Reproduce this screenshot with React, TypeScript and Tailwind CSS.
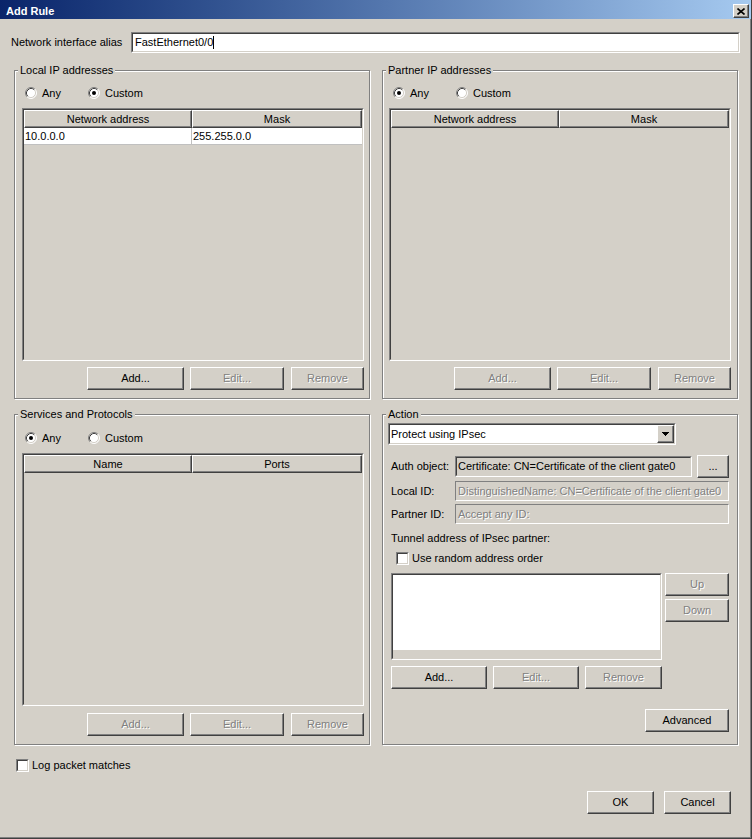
import React from 'react';

/* ===== classic 3D helpers ===== */
const DIS = 'text-[#808080] [text-shadow:1px_1px_0_#fff]';

type BtnProps = { label: string; disabled?: boolean; className?: string };

const Button = ({ label, disabled, className = '' }: BtnProps) => (
  <div
    className={`h-[23px] shrink-0 flex items-center justify-center bg-[#d4d0c8] border border-t-white border-l-white border-r-[#404040] border-b-[#404040] shadow-[inset_-1px_-1px_0_#808080] ${className}`}
  >
    <span className={disabled ? DIS : 'text-black'}>{label}</span>
  </div>
);

type SunkenProps = { className?: string; inner?: string; children?: React.ReactNode };

const Sunken = ({ className = '', inner = '', children }: SunkenProps) => (
  <div className={`shrink-0 border border-t-[#808080] border-l-[#808080] border-b-white border-r-white ${className}`}>
    <div className={`h-full border border-t-[#404040] border-l-[#404040] border-b-[#d4d0c8] border-r-[#d4d0c8] ${inner}`}>
      {children}
    </div>
  </div>
);

const Radio = ({ checked }: { checked?: boolean }) => (
  <svg width="12" height="12" viewBox="0 0 12 12" className="shrink-0">
    <circle cx="6" cy="6" r="5" fill="#fff" />
    <path d="M2.11 9.89A5.5 5.5 0 0 1 9.89 2.11" fill="none" stroke="#808080" />
    <path d="M2.82 9.18A4.5 4.5 0 0 1 9.18 2.82" fill="none" stroke="#404040" />
    <path d="M9.89 2.11A5.5 5.5 0 0 1 2.11 9.89" fill="none" stroke="#fff" />
    <path d="M9.18 2.82A4.5 4.5 0 0 1 2.82 9.18" fill="none" stroke="#d4d0c8" />
    {checked && <circle cx="6" cy="6" r="2" fill="#000" />}
  </svg>
);

const Checkbox = () => <Sunken className="w-[13px] h-[13px]" inner="bg-white" />;

const RadioRow = ({ any }: { any: boolean }) => (
  <div className="flex items-center h-[16px]">
    <div className="w-[63px] flex items-center gap-[5px]">
      <Radio checked={any} />
      <span>Any</span>
    </div>
    <div className="flex items-center gap-[5px]">
      <Radio checked={!any} />
      <span>Custom</span>
    </div>
  </div>
);

type GroupProps = { title: string; className?: string; children?: React.ReactNode };

const GroupBox = ({ title, className = '', children }: GroupProps) => (
  <div className={`relative w-[356px] border border-[#808080] shadow-[inset_1px_1px_0_#fff,1px_1px_0_#fff] ${className}`}>
    <span className="absolute -top-[7px] left-[3px] px-[2px] bg-[#d4d0c8] leading-[13px]">{title}</span>
    {children}
  </div>
);

type TableProps = { cols: [string, string]; rows: [string, string][] };

const ListTable = ({ cols, rows }: TableProps) => (
  <Sunken className="w-[342px] h-[253px]" inner="flex flex-col bg-[#d4d0c8]">
    <div className="flex h-[18px] shrink-0">
      {cols.map((c, i) => (
        <div
          key={c}
          className={`${i === 0 ? 'w-[168px]' : 'flex-1'} flex items-center justify-center bg-[#d4d0c8] border border-t-white border-l-white border-r-[#404040] border-b-[#404040] shadow-[inset_-1px_-1px_0_#808080]`}
        >
          {c}
        </div>
      ))}
    </div>
    {rows.map(r => (
      <div key={r[0]} className="flex h-[17px] shrink-0 bg-white border-b border-b-[#c0c0c0]">
        <div className="w-[168px] pl-[1px] flex items-center border-r border-r-[#c0c0c0]">{r[0]}</div>
        <div className="flex-1 pl-[1px] flex items-center">{r[1]}</div>
      </div>
    ))}
  </Sunken>
);

type ListGroupProps = {
  title: string;
  any: boolean;
  cols: [string, string];
  rows: [string, string][];
  addEnabled: boolean;
  top: string;
  btnTop: string;
  left?: string;
};

const ListGroup = ({ title, any, cols, rows, addEnabled, top, btnTop, left = 'ml-[7px]' }: ListGroupProps) => (
  <GroupBox title={title} className="flex flex-col pb-[8px]">
    <div className={`${top} pl-[10px]`}>
      <RadioRow any={any} />
    </div>
    <div className={`${left} mt-[7px]`}>
      <ListTable cols={cols} rows={rows} />
    </div>
    <div className={`${left} w-[342px] flex justify-end ${btnTop}`}>
      <Button label="Add..." disabled={!addEnabled} className="w-[97px]" />
      <Button label="Edit..." disabled className="ml-[6px] w-[94px]" />
      <Button label="Remove" disabled className="ml-[7px] w-[73px]" />
    </div>
  </GroupBox>
);

/* ===== Action ===== */
const ActionGroup = () => (
  <GroupBox title="Action" className="flex flex-col pl-[5px]">
    <Sunken className="mt-[8px] w-[288px] h-[22px]" inner="bg-white flex items-stretch">
      <div className="flex-1 pl-[1px] flex items-center">Protect using IPsec</div>
      <div className="w-[17px] flex items-center justify-center bg-[#d4d0c8] border border-t-white border-l-white border-r-[#404040] border-b-[#404040] shadow-[inset_-1px_-1px_0_#808080]">
        <svg width="7" height="4" viewBox="0 0 7 4">
          <path d="M0 0h7v1H0zM1 1h5v1H1zM2 2h3v1H2zM3 3h1v1H3z" fill="#000" />
        </svg>
      </div>
    </Sunken>

    <div className="mt-[10px] h-[23px] flex items-center">
      <div className="w-[67px] pl-[3px]">Auth object:</div>
      <Sunken className="w-[237px] h-[21px]" inner="bg-[#d4d0c8] pl-[1px] flex items-center whitespace-nowrap overflow-hidden">
        Certificate: CN=Certificate of the client gate0
      </Sunken>
      <Button label="..." className="ml-[5px] w-[32px]" />
    </div>

    <div className="mt-[3px] h-[20px] flex items-center">
      <div className="w-[67px] pl-[3px]">Local ID:</div>
      <div className="w-[274px] h-[20px] pl-[2px] flex items-center border border-t-[#808080] border-l-[#808080] border-b-white border-r-white whitespace-nowrap overflow-hidden">
        <span className={DIS}>DistinguishedName: CN=Certificate of the client gate0</span>
      </div>
    </div>

    <div className="mt-[3px] h-[20px] flex items-center">
      <div className="w-[67px] pl-[3px]">Partner ID:</div>
      <div className="w-[274px] h-[20px] pl-[2px] flex items-center border border-t-[#808080] border-l-[#808080] border-b-white border-r-white">
        <span className={DIS}>Accept any ID:</span>
      </div>
    </div>

    <div className="mt-[8px] pl-[3px] leading-[13px]">Tunnel address of IPsec partner:</div>

    <div className="mt-[7px] pl-[8px] h-[13px] flex items-center gap-[3px]">
      <Checkbox />
      <span>Use random address order</span>
    </div>

    <div className="mt-[8px] pl-[3px] flex">
      <Sunken className="w-[271px] h-[87px]" inner="flex flex-col bg-white">
        <div className="flex-1" />
        <div className="h-[8px] bg-[#d4d0c8]" />
      </Sunken>
      <div className="ml-[3px] flex flex-col">
        <Button label="Up" disabled className="w-[64px]" />
        <Button label="Down" disabled className="mt-[3px] w-[64px]" />
      </div>
    </div>

    <div className="mt-[6px] pl-[3px] flex">
      <Button label="Add..." className="w-[96px]" />
      <Button label="Edit..." disabled className="ml-[6px] w-[86px]" />
      <Button label="Remove" disabled className="ml-[6px] w-[77px]" />
    </div>

    <Button label="Advanced" className="mt-[20px] ml-[257px] w-[84px]" />
  </GroupBox>
);

export default function App() {
  return (
    <div className="w-[752px] h-[839px] flex flex-col bg-[#d4d0c8] text-black text-[11px] leading-[13px] font-['Liberation_Sans',Arial,sans-serif] border-r border-b border-r-[#404040] border-b-[#404040] shadow-[inset_-1px_-1px_0_#808080]">
      {/* title bar */}
      <div className="h-[19px] pt-[3px] flex items-center bg-gradient-to-r from-[#0a246a] to-[#a6caf0]">
        <span className="pl-[6px] font-bold text-white">Add Rule</span>
        <div className="ml-auto mr-[2px] w-[16px] h-[14px] flex items-center justify-center bg-[#d4d0c8] border border-t-white border-l-white border-r-[#404040] border-b-[#404040] shadow-[inset_-1px_-1px_0_#808080]">
          <svg width="8" height="7" viewBox="0 0 8 7">
            <path d="M0.5 0.5L7.5 6.5M7.5 0.5L0.5 6.5" stroke="#000" strokeWidth="1.6" />
          </svg>
        </div>
      </div>

      {/* alias */}
      <div className="mt-[13px] h-[21px] pl-[11px] flex items-center">
        <div className="w-[120px]">Network interface alias</div>
        <Sunken className="w-[609px] h-[21px]" inner="bg-white pl-[2px] flex items-center">
          <span>FastEthernet0/0</span>
          <span className="w-px h-[13px] bg-black" />
        </Sunken>
      </div>

      {/* ip addresses */}
      <div className="mt-[17px] pl-[14px] flex gap-[12px]">
        <ListGroup
          title="Local IP addresses"
          any={false}
          cols={['Network address', 'Mask']}
          rows={[['10.0.0.0', '255.255.0.0']]}
          addEnabled
          top="pt-[14px]"
          btnTop="mt-[6px]"
        />
        <ListGroup
          title="Partner IP addresses"
          any
          cols={['Network address', 'Mask']}
          rows={[]}
          addEnabled={false}
          top="pt-[14px]"
          btnTop="mt-[6px]"
          left="ml-[6px]"
        />
      </div>

      {/* services + action */}
      <div className="mt-[15px] pl-[14px] flex gap-[12px]">
        <ListGroup
          title="Services and Protocols"
          any
          cols={['Name', 'Ports']}
          rows={[]}
          addEnabled={false}
          top="pt-[15px]"
          btnTop="mt-[7px]"
        />
        <ActionGroup />
      </div>

      <div className="mt-[14px] pl-[16px] h-[13px] flex items-center gap-[3px]">
        <Checkbox />
        <span>Log packet matches</span>
      </div>

      <div className="mt-[19px] pr-[20px] flex justify-end gap-[10px]">
        <Button label="OK" className="w-[67px]" />
        <Button label="Cancel" className="w-[67px]" />
      </div>
    </div>
  );
}
